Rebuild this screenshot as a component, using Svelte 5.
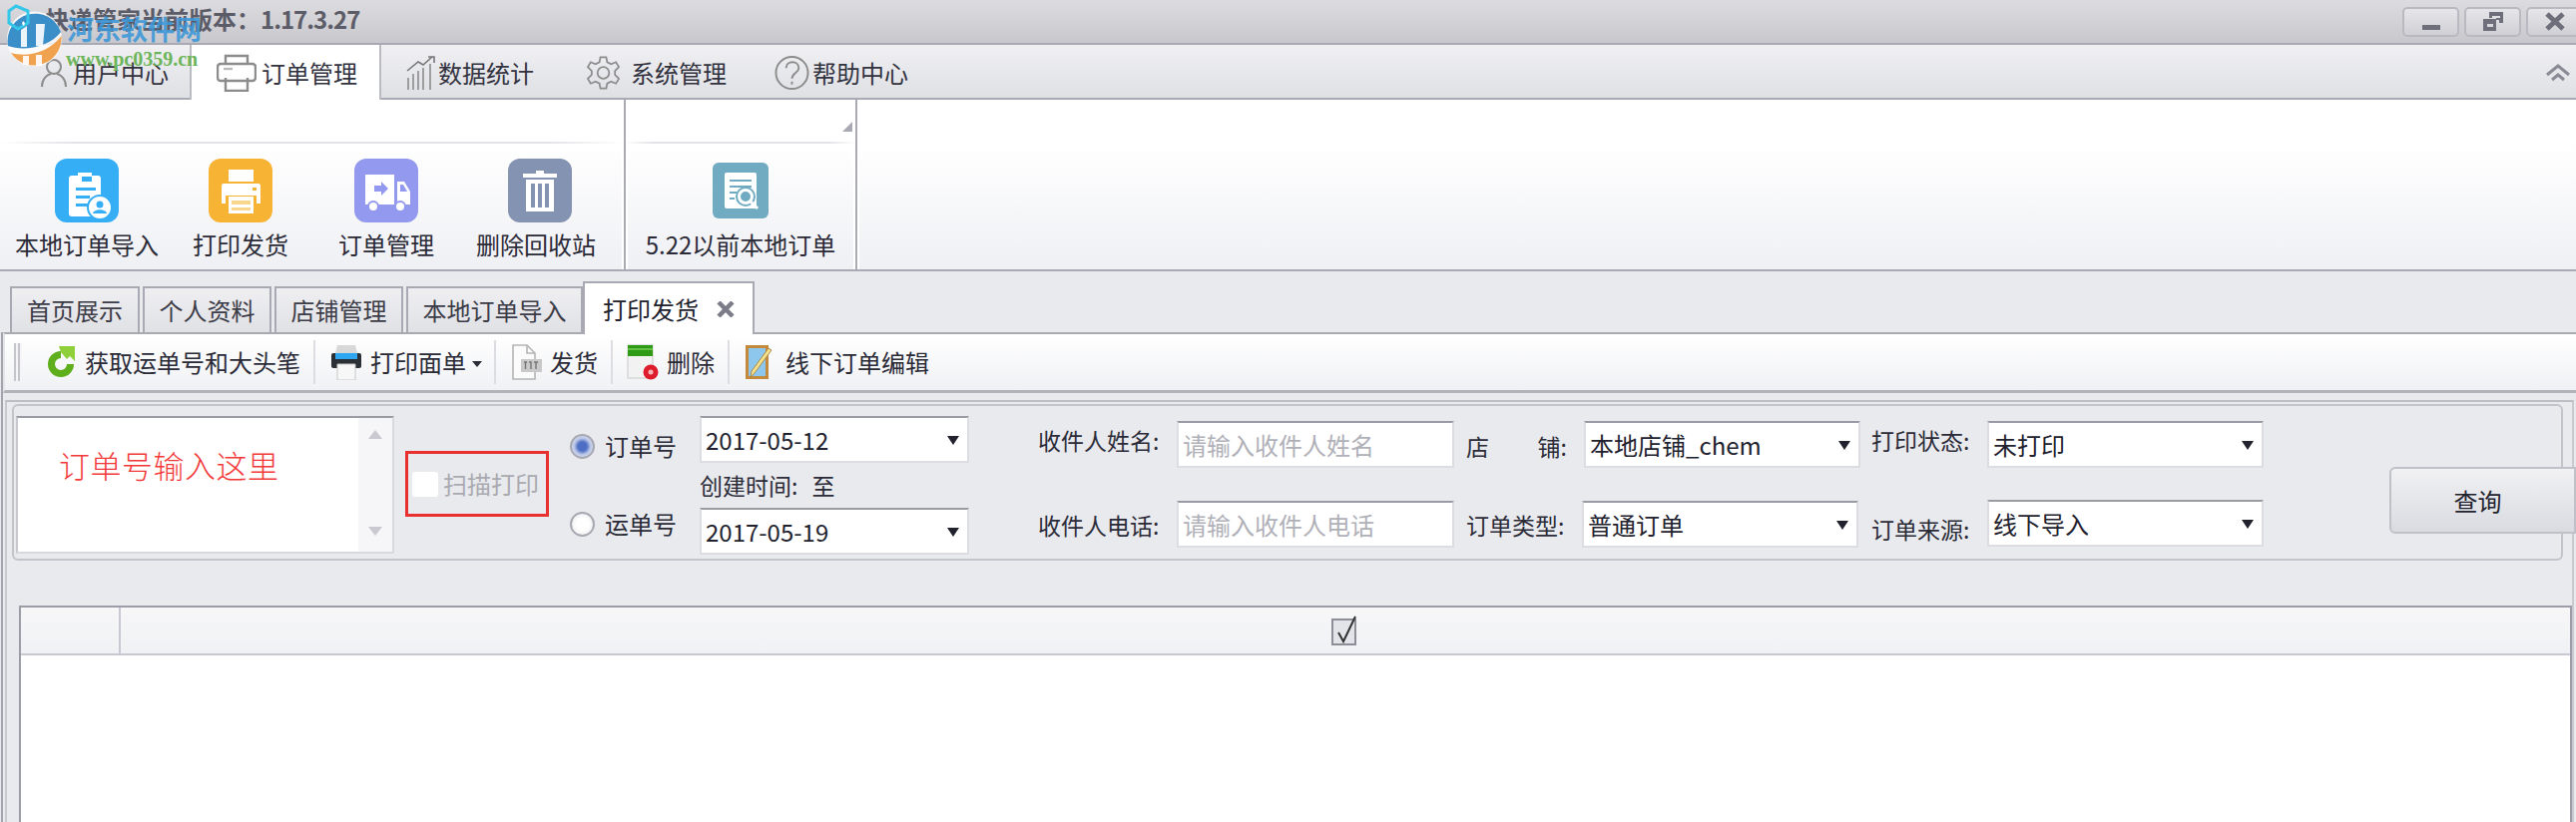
<script>
  const subTabs = ['首页展示', '个人资料', '店铺管理', '本地订单导入'];
</script>

<div class="app">
  <header class="titlebar">
    <span class="title">快递管家当前版本：<span class="version">1.17.3.27</span></span>
    <div class="winbtns">
      <button type="button" class="winbtn" aria-label="最小化"><span class="min-glyph"></span></button>
      <button type="button" class="winbtn" aria-label="还原">
        <svg width="24" height="24" viewBox="0 0 24 24"><path d="M8 2h14v11h-4v-3h-3v-2h4V6H11v2H8z M2 9h13v12H2z M6 14v3h6v-3z" fill="#6f6f7c" fill-rule="evenodd"/></svg>
      </button>
      <button type="button" class="winbtn" aria-label="关闭">
        <svg width="24" height="24" viewBox="0 0 24 24"><path d="M4 4l16 15M20 4L4 19" stroke="#6f6f7c" stroke-width="5" fill="none"/></svg>
      </button>
    </div>
  </header>

  <nav class="menutabs">
    <div class="menutab">
      <svg width="26" height="30" viewBox="0 0 26 30" fill="none" stroke="#8c8c8c" stroke-width="2"><circle cx="13" cy="9" r="7"/><path d="M1 29c0-8 5-12 9-13M25 29c0-8-5-12-9-13"/></svg>
      用户中心
    </div>
    <div class="menutab active">
      <svg width="40" height="38" viewBox="0 0 40 38" fill="none" stroke="#8c8c8c" stroke-width="2.4"><path d="M9 10V2h22v8"/><rect x="1" y="10" width="38" height="17" rx="3"/><path d="M9 24v13h22V24"/><path d="M7 15h9" stroke="#bbb"/></svg>
      订单管理
    </div>
    <div class="menutab">
      <svg width="30" height="34" viewBox="0 0 30 34" fill="none" stroke="#8c8c8c" stroke-width="1.6"><path d="M2 34V22M7 34V18M12 34V15M17 34V12M24 34V8"/><path d="M1 15L12 6l5 3 9-8" stroke="#777"/><path d="M22 1h6v6" stroke="#777"/></svg>
      数据统计
    </div>
    <div class="menutab">
      <svg width="35" height="36" viewBox="0 0 36 36" fill="none" stroke="#8c8c8c" stroke-width="1.8"><path d="M15 2h6l1 5 4 2 5-2 3 5-4 4v4l4 4-3 5-5-2-4 2-1 5h-6l-1-5-4-2-5 2-3-5 4-4v-4l-4-4 3-5 5 2 4-2z"/><circle cx="18" cy="18" r="6"/></svg>
      系统管理
    </div>
    <div class="menutab">
      <svg width="35" height="36" viewBox="0 0 36 36" fill="none" stroke="#8c8c8c" stroke-width="2"><circle cx="18" cy="18" r="16.5"/><path d="M12 13c0-8 13-8 13 0 0 5-7 5-7 11"/><path d="M18 27v3"/></svg>
      帮助中心
    </div>
    <svg class="collapse" width="26" height="20" viewBox="0 0 26 20" fill="none" stroke="#8a8a94" stroke-width="3"><path d="M2 12l11-9 11 9M7 17l6-5 6 5"/></svg>
  </nav>

  <section class="ribbon">
    <div class="group first">
      <div class="group-head"></div>
      <div class="group-items">
        <div class="rb-item">
          <svg class="rb-icon" viewBox="0 0 64 64">
            <rect width="64" height="64" rx="12" fill="#36aef5"/>
            <path d="M14 20a3 3 0 0 1 3-3h6v-3h14v3h6a3 3 0 0 1 3 3v38H17a3 3 0 0 1-3-3z" fill="#fff"/>
            <path d="M27 18h10v5H27zM21 29h20v3H21zM21 37h14v3H21zM21 45h12v3H21z" fill="#36aef5"/>
            <circle cx="45" cy="49" r="12" fill="#fff" stroke="#36aef5" stroke-width="2"/>
            <circle cx="45" cy="46" r="3.5" fill="#36aef5"/>
            <path d="M38 55c1-5 13-5 14 0z" fill="#36aef5"/>
          </svg>
          <span>本地订单导入</span>
        </div>
        <div class="rb-item">
          <svg class="rb-icon" viewBox="0 0 64 64">
            <rect width="64" height="64" rx="12" fill="#f6b334"/>
            <path d="M20 11h25v12H20zM15 25h35a2 2 0 0 1 2 2v18h-4v-8H17v8h-4V27a2 2 0 0 1 2-2z" fill="#fff"/>
            <rect x="20" y="38" width="25" height="17" fill="#fff"/>
            <path d="M23 42h19v4H23zM23 49h19v3H23z" fill="#f8d68c"/>
            <path d="M44 29h4v3h-4z" fill="#f6b334"/>
          </svg>
          <span>打印发货</span>
        </div>
        <div class="rb-item">
          <svg class="rb-icon" viewBox="0 0 64 64">
            <rect width="64" height="64" rx="12" fill="#9299ee"/>
            <path d="M11 16h29v30H11zM43 23h7l6 10v13H43z" fill="#fff"/>
            <path d="M20 27h7v-4l7 7-7 7v-4h-7z" fill="#9299ee"/>
            <path d="M46 26h3l4 7h-7z" fill="#9299ee"/>
            <circle cx="19" cy="48" r="5" fill="#fff" stroke="#9299ee" stroke-width="2"/>
            <circle cx="46" cy="48" r="5" fill="#fff" stroke="#9299ee" stroke-width="2"/>
          </svg>
          <span>订单管理</span>
        </div>
        <div class="rb-item trash">
          <svg class="rb-icon" viewBox="0 0 64 64">
            <rect width="64" height="64" rx="12" fill="#8593b3"/>
            <path d="M28 12h8v3h13v4H15v-4h13zM18 21h28v32H18z" fill="#fff"/>
            <path d="M23 25h4v24h-4zM30 25h4v24h-4zM37 25h4v24h-4z" fill="#8593b3"/>
          </svg>
          <span>删除回收站</span>
        </div>
      </div>
    </div>
    <div class="group second">
      <div class="group-head"><span class="launcher"></span></div>
      <div class="group-items">
        <div class="rb-item small">
          <svg class="rb-icon" viewBox="0 0 56 56">
            <rect width="56" height="56" rx="6" fill="#70abc1"/>
            <path d="M14 10h28a2 2 0 0 1 2 2v32a2 2 0 0 1-2 2H14a2 2 0 0 1-2-2V12a2 2 0 0 1 2-2z" fill="#fff"/>
            <path d="M17 17h22v2H17zM17 23h22v2H17zM17 29h7v2h-7zM17 35h5v2h-5z" fill="#70abc1"/>
            <circle cx="33" cy="34" r="10" fill="#70abc1"/>
            <circle cx="33" cy="34" r="6.5" fill="none" stroke="#fff" stroke-width="3"/>
            <path d="M38 39l7 7" stroke="#fff" stroke-width="3"/>
          </svg>
          <span>5.22以前本地订单</span>
        </div>
      </div>
    </div>
  </section>

  <div class="subtabs">
    {#each subTabs as tab}
      <div class="subtab">{tab}</div>
    {/each}
    <div class="subtab active">
      打印发货
      <svg width="18" height="16" viewBox="0 0 18 16" aria-label="关闭"><path d="M2 1l14 14M16 1L2 15" stroke="#7c7c88" stroke-width="4.5" fill="none"/></svg>
    </div>
  </div>

  <div class="content">
    <div class="toolbar">
      <span class="grip"></span>
      <div class="tool first">
        <svg width="32" height="32" viewBox="0 0 32 32"><path d="M16 5a13 13 0 1 0 13 13h-7a6 6 0 1 1-6-6z" fill="#5fae1c"/><path d="M14 0h16v15l-5-5-3 3-6-7z" fill="#8fd03a"/></svg>
        获取运单号和大头笔
      </div>
      <div class="tool print">
        <svg width="32" height="36" viewBox="0 0 32 36"><path d="M7 1h18l2 8H5z" fill="#d8d8d8"/><rect x="1" y="9" width="30" height="15" rx="2" fill="#2b2f36"/><rect x="5" y="9" width="22" height="6" fill="#2ea6f0"/><path d="M7 20h18v16H7z" fill="#f7f7f7" stroke="#c8c8c8"/></svg>
        打印面单<span class="caret"></span>
      </div>
      <div class="tool send">
        <svg width="31" height="36" viewBox="0 0 31 36"><path d="M2 1h14l8 8v26H2z" fill="#fbfbfb" stroke="#b5b5b5" stroke-width="1.6"/><path d="M16 1v8h8" fill="none" stroke="#b5b5b5" stroke-width="1.6"/><rect x="10" y="15" width="21" height="13" fill="#c9c9c9"/><path d="M13 18h3M18 18h2v7M23 18h4M25 18v7M14.500 18v7" stroke="#777" stroke-width="1.4" fill="none"/></svg>
        发货
      </div>
      <div class="tool del">
        <svg width="32" height="36" viewBox="0 0 32 36"><rect x="1" y="1" width="25" height="33" fill="#f2f2f2" stroke="#c8c8c8"/><rect x="1" y="1" width="25" height="11" fill="#2f9a16"/><path d="M1 5h25" stroke="#63bf45" stroke-width="2"/><circle cx="24" cy="28" r="7.500" fill="#dd1c2c"/><circle cx="24" cy="28" r="2.500" fill="#f6b4b9"/></svg>
        删除
      </div>
      <div class="tool edit">
        <svg width="28" height="36" viewBox="0 0 28 36"><rect x="1" y="1" width="23" height="34" fill="#c48a3c"/><rect x="4" y="4" width="17" height="28" fill="#8ec7ee"/><path d="M27 6L10 29l-4 4 1-6L24 4z" fill="#f5e08a" stroke="#a8894e"/></svg>
        线下订单编辑
      </div>
    </div>

    <div class="panel">
      <form class="filter" on:submit|preventDefault>
        <div class="memo">
          <span class="memo-text">订单号输入这里</span>
          <div class="memo-scroll"><span class="up"></span><span class="down"></span></div>
        </div>

        <label class="scan"><span class="scan-check"></span>扫描打印</label>

        <div class="radios">
          <label class="radio on"><span class="dot"></span>订单号</label>
          <label class="radio"><span class="dot"></span>运单号</label>
        </div>

        <div class="dates">
          <div class="field combo">2017-05-12<span class="arrow"></span></div>
          <div class="created"><span>创建时间:</span><span>至</span></div>
          <div class="field combo">2017-05-19<span class="arrow"></span></div>
        </div>

        <div class="fields">
          <span class="lab up-a">收件人姓名:</span>
          <input class="field" placeholder="请输入收件人姓名" />
          <span></span>
          <span class="lab spread"><i>店</i><i>铺:</i></span>
          <div class="field combo">本地店铺_chem<span class="arrow"></span></div>
          <span></span>
          <span class="lab up-a">打印状态:</span>
          <div class="field combo">未打印<span class="arrow"></span></div>

          <span class="lab">收件人电话:</span>
          <input class="field" placeholder="请输入收件人电话" />
          <span></span>
          <span class="lab">订单类型:</span>
          <div class="field combo shift-l">普通订单<span class="arrow"></span></div>
          <span></span>
          <span class="lab down-a">订单来源:</span>
          <div class="field combo shift-u">线下导入<span class="arrow"></span></div>
        </div>

        <button type="submit" class="query">查询</button>
      </form>

      <div class="grid">
        <div class="grid-head">
          <div class="corner"></div>
          <div class="head-main">
            <svg width="26" height="30" viewBox="0 0 26 30"><rect x="1" y="4" width="23" height="25" fill="#e3e3ea" stroke="#8e8e98" stroke-width="2"/><path d="M7 17l5 9L24 1" fill="none" stroke="#333" stroke-width="2"/></svg>
          </div>
        </div>
        <div class="grid-body"></div>
      </div>
    </div>
  </div>

  <div class="watermark" aria-hidden="true">
    <svg class="wm-logo" width="70" height="70" viewBox="0 0 70 70">
      <circle cx="34.500" cy="39" r="27.500" fill="#fff" opacity=".8"/>
      <path d="M8 46A27.500 27.500 0 0 1 61 32C50 47 24 52 8 46z" fill="#3b8fc8"/>
      <path d="M21 30l6-4v21h-6zM36 24h9l-2 22h-7z" fill="#fff" opacity=".9"/>
      <path d="M11 53C28 58 50 52 61.500 36A27.500 27.500 0 0 1 11 53z" fill="#f0a24f"/>
      <path d="M23 56h6v9h-6zM36 55h6v11h-6z" fill="#fff" opacity=".9"/>
      <path d="M16 6l12 5v12l-10 6-9-6V11z" fill="none" stroke="#35c7ea" stroke-width="3"/>
      <path d="M23 21l2 2-1 3-2-2z" fill="#fff"/>
    </svg>
    <span class="wm-cn">河东软件网</span>
    <span class="wm-url">www.pc0359.cn</span>
  </div>
</div>

<style>
  :global(body) {
    margin: 0;
  }

  .app {
    position: relative;
    width: 2581px;
    height: 824px;
    overflow: hidden;
    background: #e9eaee;
    color: #2b2b38;
    font-family: "Noto Sans CJK SC", "Noto Sans", sans-serif;
    font-size: 24px;
    line-height: 30px;
  }

  .titlebar {
    display: flex;
    justify-content: space-between;
    height: 43px;
    padding-left: 45px;
    background: linear-gradient(#dcdce0, #c7c7cd);
    border-bottom: 2px solid #a9a9b3;
  }

  .title {
    font-weight: 700;
    color: #5c5c68;
    line-height: 38px;
  }

  .version {
    letter-spacing: -1px;
  }

  .winbtns {
    display: flex;
    gap: 5px;
    padding-top: 7px;
    margin-right: -7px;
  }

  .winbtn {
    display: flex;
    align-items: center;
    justify-content: center;
    width: 57px;
    height: 30px;
    padding: 0;
    border: 2px solid #b9b9c1;
    border-radius: 5px;
    background: linear-gradient(#e6e6ea, #cfcfd5);
  }

  .min-glyph {
    width: 18px;
    height: 5px;
    margin-top: 10px;
    background: #6f6f7c;
  }

  .menutabs {
    position: relative;
    display: flex;
    height: 53px;
    background: linear-gradient(#f0f0f3, #dfe0e4);
    border-bottom: 2px solid #aaaab4;
    color: #33333f;
  }

  .menutab {
    display: flex;
    align-items: center;
    height: 55px;
    white-space: nowrap;
    box-sizing: border-box;
  }

  .menutab:nth-child(1) {
    width: 192px;
    padding-left: 41px;
    gap: 6px;
    border-right: 2px solid #bbbbc3;
  }

  .menutab:nth-child(2) {
    width: 188px;
    padding-left: 25px;
    gap: 5px;
  }

  .menutab:nth-child(3) {
    padding: 0 26px 0 25px;
    gap: 2px;
    border-left: 2px solid #bbbbc3;
  }

  .menutab:nth-child(4) {
    padding: 0 24px 0 26px;
    gap: 10px;
  }

  .menutab:nth-child(5) {
    padding-left: 24px;
    gap: 3px;
  }

  .menutab.active {
    background: #fff;
  }

  .collapse {
    position: absolute;
    right: 5px;
    top: 18px;
  }

  .ribbon {
    display: flex;
    height: 170px;
    background: linear-gradient(#fff 25%, #eff0f4);
    border-bottom: 2px solid #aaaab4;
  }

  .group {
    display: flex;
    flex-direction: column;
    box-sizing: border-box;
    border-right: 2px solid #aaaab4;
    box-shadow: 2px 0 0 #fff, inset -2px 0 0 #fff;
  }

  .group.first {
    width: 627px;
  }

  .group.second {
    width: 232px;
  }

  .group-head {
    position: relative;
    flex: none;
    height: 44px;
    box-sizing: border-box;
    border-bottom: 2px solid;
    border-image: linear-gradient(90deg, #fff0, #e3e3e8 12%, #e3e3e8 88%, #fff0) 1;
  }

  .launcher {
    position: absolute;
    right: 3px;
    top: 22px;
    border-style: solid;
    border-width: 0 0 10px 10px;
    border-color: transparent transparent #a9a9b3 transparent;
  }

  .group-items {
    display: grid;
    grid-template-columns: 174px 134px 158px 142px;
    justify-items: center;
    padding-top: 15px;
  }

  .second .group-items {
    grid-template-columns: 1fr;
    padding-top: 19px;
  }

  .rb-item {
    display: flex;
    flex-direction: column;
    align-items: center;
    gap: 7px;
    white-space: nowrap;
  }

  .rb-item.small {
    gap: 11px;
  }

  .rb-icon {
    display: block;
    width: 64px;
    height: 64px;
  }

  .trash .rb-icon {
    margin-left: 8px;
  }

  .small .rb-icon {
    width: 56px;
    height: 56px;
  }

  .subtabs {
    display: flex;
    align-items: flex-end;
    gap: 3px;
    height: 61px;
    padding-left: 10px;
    box-sizing: border-box;
  }

  .subtab {
    display: flex;
    align-items: center;
    justify-content: center;
    height: 46px;
    width: 129px;
    box-sizing: border-box;
    background: linear-gradient(#efeff2, #e0e1e5);
    border: 2px solid #a9a9b3;
    border-bottom: 0;
    color: #3c3c48;
  }

  .subtab:nth-child(1) {
    width: 130px;
  }

  .subtab:nth-child(4) {
    width: 177px;
    margin-right: -3px;
  }

  .subtab.active {
    position: relative;
    z-index: 1;
    width: 172px;
    height: 53px;
    margin-bottom: -2px;
    justify-content: flex-start;
    padding-left: 18px;
    gap: 18px;
    background: #fff;
    color: #22222e;
  }

  .content {
    margin-left: 1px;
    height: 491px;
    border-left: 2px solid #a4a4ae;
  }

  .toolbar {
    display: flex;
    align-items: center;
    height: 61px;
    box-sizing: border-box;
    background: linear-gradient(#fff, #f0f1f4);
    border-top: 2px solid #a9a9b3;
    border-bottom: 3px solid #b2b2bb;
    border-left: 2px solid #e4e4e9;
  }

  .grip {
    width: 8px;
    height: 38px;
    margin: 0 0 0 9px;
    background: repeating-linear-gradient(90deg, #c4c4cb 0 2px, #f5f5f7 2px 4px);
  }

  .tool {
    display: flex;
    align-items: center;
    white-space: nowrap;
    height: 44px;
    gap: 8px;
    border-right: 2px solid #dcdce2;
  }

  .tool.first {
    margin-left: 23px;
    padding-right: 13px;
  }

  .tool.print {
    padding: 0 12px 0 15px;
  }

  .tool.send {
    padding: 0 13px 0 15px;
  }

  .tool.del {
    padding: 0 13px 0 14px;
  }

  .tool.edit {
    padding-left: 15px;
    gap: 13px;
    border: 0;
  }

  .caret {
    margin: 4px 0 0 -2px;
    border-style: solid;
    border-width: 6px 5px 0;
    border-color: #2b2b38 transparent transparent;
  }

  .panel {
    display: flex;
    flex-direction: column;
    margin: 7px 2px 0 2px;
    height: 500px;
    border-top: 2px solid #bdbdc5;
    border-left: 2px solid #c9c9d0;
    border-right: 2px solid #c9c9d0;
  }

  .filter {
    display: flex;
    align-items: flex-start;
    height: 157px;
    box-sizing: border-box;
    width: 2556px;
    margin: 2px 0 0 5px;
    padding: 10px 0 0 2px;
    border: 2px solid #c3c3cb;
    border-radius: 6px;
  }

  .memo {
    display: flex;
    justify-content: space-between;
    width: 379px;
    height: 138px;
    box-sizing: border-box;
    flex: none;
    background: #fff;
    border-top: 2px solid #9a9aa5;
    border-left: 2px solid #c8c8d0;
    border-right: 2px solid #d8d8de;
    border-bottom: 2px solid #d8d8de;
  }

  .memo-text {
    margin: 29px 0 0 41px;
    font-size: 31px;
    font-weight: 300;
    line-height: 36px;
    letter-spacing: 0.5px;
    color: #f23a3a;
  }

  .memo-scroll {
    display: flex;
    flex-direction: column;
    justify-content: space-between;
    align-items: center;
    width: 34px;
    padding: 12px 0 16px;
    box-sizing: border-box;
    background: #f6f6f8;
  }

  .up,
  .down {
    border-style: solid;
    border-color: transparent;
    border-width: 0 7px;
  }

  .up {
    border-bottom: 9px solid #c9c9cf;
  }

  .down {
    border-top: 9px solid #c9c9cf;
  }

  .scan {
    display: flex;
    align-items: center;
    flex: none;
    gap: 5px;
    width: 144px;
    height: 66px;
    box-sizing: border-box;
    margin: 35px 0 0 11px;
    padding: 0 0 0 4px;
    border: 3px solid #e8312f;
    color: #a9a9b0;
    white-space: nowrap;
  }

  .scan-check {
    width: 26px;
    height: 25px;
    background: #fff;
    border-radius: 3px;
  }

  .radios {
    display: flex;
    flex-direction: column;
    flex: none;
    gap: 48px;
    width: 130px;
    margin: 15px 0 0 21px;
  }

  .radio {
    display: flex;
    align-items: center;
    gap: 10px;
    height: 30px;
    white-space: nowrap;
  }

  .dot {
    width: 25px;
    height: 25px;
    box-sizing: border-box;
    border-radius: 50%;
    background: radial-gradient(#fff 40%, #e6e6ea);
    border: 2px solid #a8a8b2;
  }

  .radio.on .dot {
    background: radial-gradient(#4f6fc4 30%, #b9c6e8 55%, #f3f3f6);
  }

  .dates {
    display: flex;
    flex-direction: column;
    flex: none;
    width: 270px;
  }

  .dates .combo {
    height: 47px;
  }

  .created {
    display: flex;
    gap: 14px;
    height: 45px;
    line-height: 44px;
    font-size: 23px;
    white-space: nowrap;
  }

  .field {
    display: block;
    position: relative;
    width: 100%;
    height: 47px;
    box-sizing: border-box;
    margin: 0;
    padding: 0 0 0 4px;
    background: #fff;
    border: 2px solid #dcdce2;
    border-top-color: #9a9aa5;
    border-radius: 0;
    font: inherit;
    line-height: 43px;
    color: #22222e;
    outline: none;
    white-space: nowrap;
  }

  .field::placeholder {
    color: #b0b0b8;
    opacity: 1;
  }

  .arrow {
    position: absolute;
    right: 8px;
    top: 18px;
    border-style: solid;
    border-width: 9px 6px 0;
    border-color: #22222e transparent transparent;
  }

  .fields {
    display: grid;
    flex: none;
    grid-template-columns: 139px 278px 12px 118px 277px 11px 116px 277px;
    grid-template-rows: 47px 47px;
    row-gap: 33px;
    align-items: center;
    margin: 5px 0 0 69px;
  }

  .lab {
    font-size: 23px;
    white-space: nowrap;
  }

  .up-a {
    margin-bottom: 9px;
  }

  .down-a {
    margin-top: 9px;
  }

  .spread {
    display: flex;
    justify-content: space-between;
    width: 101px;
    margin-top: 3px;
  }

  .spread i {
    font-style: normal;
  }

  .shift-l {
    margin-left: -2px;
  }

  .shift-u {
    margin-top: -2px;
  }

  .query {
    flex: none;
    width: 187px;
    height: 67px;
    margin: 51px 0 0 126px;
    padding: 0 10px 0 0;
    border: 2px solid #c0c0c8;
    border-radius: 6px 0 0 6px;
    background: linear-gradient(#f1f1f3, #d9dbe1);
    font: inherit;
    color: #22222e;
    text-align: center;
  }

  .grid {
    display: flex;
    flex-direction: column;
    flex: 1;
    width: 2558px;
    box-sizing: border-box;
    margin: 45px 0 0 12px;
    background: #fff;
    border-left: 2px solid #9c9ca8;
    border-right: 2px solid #9c9ca8;
  }

  .grid-head {
    display: flex;
    height: 50px;
    box-sizing: border-box;
    flex: none;
    background: linear-gradient(#f7f7f8, #f0f1f4);
    border-top: 2px solid #9c9ca8;
    border-bottom: 2px solid #c8c8d2;
  }

  .corner {
    width: 98px;
    border-right: 2px solid #c8c8d2;
  }

  .head-main {
    display: flex;
    flex: 1;
    justify-content: center;
    align-items: center;
    padding-right: 3px;
  }

  .grid-body {
    flex: 1;
  }

  .watermark {
    position: absolute;
    left: 0;
    top: 0;
    width: 220px;
    height: 76px;
    pointer-events: none;
  }

  .wm-logo {
    position: absolute;
    left: 0;
    top: 0;
  }

  .wm-cn {
    position: absolute;
    left: 67px;
    top: 14px;
    font-size: 27px;
    font-weight: 700;
    color: #3b97d8;
    opacity: 0.88;
    white-space: nowrap;
  }

  .wm-url {
    position: absolute;
    left: 66px;
    top: 44px;
    font-family: "Liberation Serif", serif;
    font-size: 20px;
    font-weight: 700;
    color: #6db55a;
    white-space: nowrap;
  }
</style>
